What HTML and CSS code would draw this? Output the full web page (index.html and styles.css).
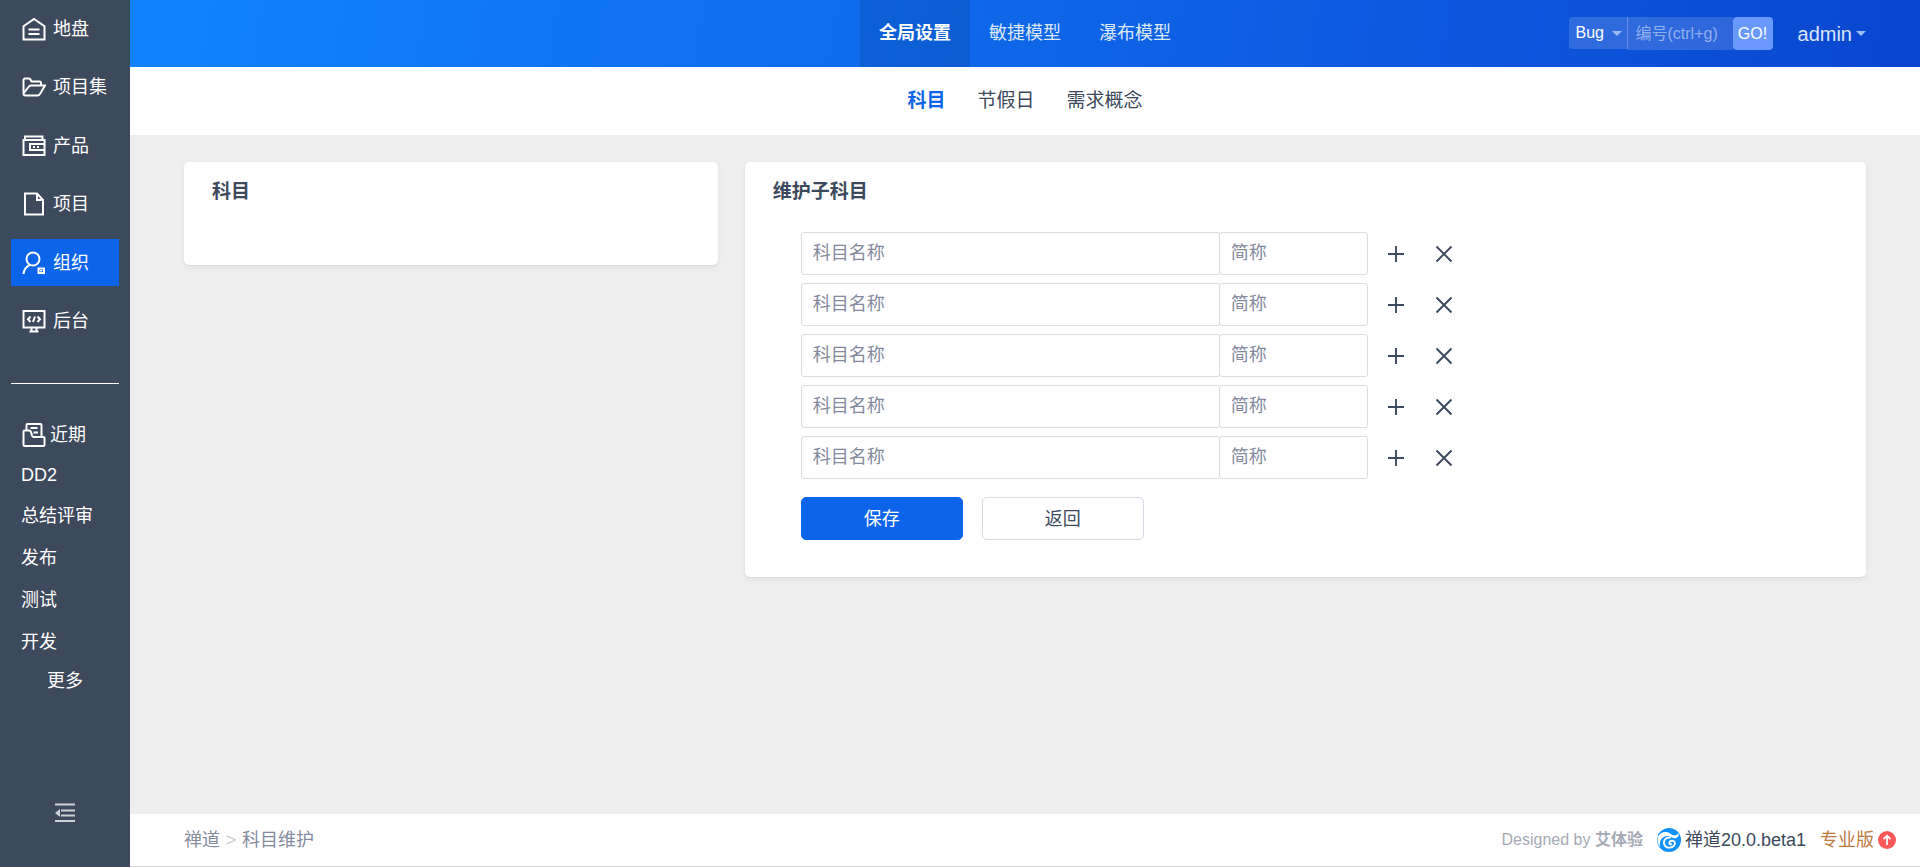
FILE: index.html
```html
<!DOCTYPE html>
<html lang="zh-CN">
<head>
<meta charset="utf-8">
<title>科目维护</title>
<link rel="stylesheet" href="styles.css">
</head>
<body>
<div class="app">
  <aside class="sidebar">
    <nav class="menu">
      <a class="menu-item" href="#"><svg class="icon" viewBox="0 0 24 24"><path d="M1.500 9.200 12 2l10.500 7.200V22.500h-21z"/><path d="M6.500 12.500h11M6.500 17h11"/></svg>地盘</a>
      <a class="menu-item" href="#"><svg class="icon" viewBox="0 0 24 24"><path d="M1.500 18.500V5q0-1.500 1.500-1.500h4q1 0 1.500 1l1 2h8q1.500 0 1.500 1.500v2.500M1.500 18.500l5-6.500q1-1.500 2.500-1.500h14l-5 8.500q-1 1.500-2.500 1.500h-12q-2 0-2-2z"/></svg>项目集</a>
      <a class="menu-item" href="#"><svg class="icon" viewBox="0 0 24 24"><path d="M3 6V2.500h17.500V6M1.500 6h21v15h-21zM22.500 10H8v6h14.500"/><path d="M11 13h2M15 13h2"/></svg>产品</a>
      <a class="menu-item" href="#"><svg class="icon" viewBox="0 0 24 24"><path d="M3 1.500h12l6 6.500v14.500H3zM15 1.500V8h6"/></svg>项目</a>
      <a class="menu-item is-active" href="#"><svg class="icon" viewBox="0 0 24 24"><circle cx="11" cy="8" r="6.500"/><path d="M1.500 23c.3-4 2.500-7 6-8.800"/><path d="M16.500 17.500h5.500v4.500h-5.500zM19.200 19v1.500"/></svg>组织</a>
      <a class="menu-item" href="#"><svg class="icon" viewBox="0 0 24 24"><path d="M1.500 2h21v16.500h-21zM9.500 18.500v3.500M14.500 18.500v3.500M7.500 22.500h9M8.500 7.500 6 10.200 8.500 13M15.500 7.500l2.500 2.700-2.500 2.800M13 7.500 11 13"/></svg>后台</a>
    </nav>
    <div class="recent">
      <h2 class="recent-title"><svg class="icon" viewBox="0 0 24 24"><path d="M4.500 7.500V2q0-1 1-1h13q1 0 1 1v12M1.500 21.500v-13q0-1 1-1H7q1.500 0 2 1.500l1 3.500q.5 1.500 2 1.500h9.500q1 0 1 1v6.500q0 1.500-1 1.500h-19q-1 0-1-1.500zM8.500 5h7M11.500 9.500H16"/></svg>近期</h2>
      <a class="recent-item" href="#">DD2</a>
      <a class="recent-item" href="#">总结评审</a>
      <a class="recent-item" href="#">发布</a>
      <a class="recent-item" href="#">测试</a>
      <a class="recent-item" href="#">开发</a>
      <a class="recent-more" href="#">更多</a>
    </div>
    <button class="collapse" type="button" aria-label="收起菜单"><svg viewBox="0 0 20 20"><path d="M0 1.500h20M6 7.500h14M6 12.500h14M0 18h20"/><path class="solid" d="M0 10l5-4v8z"/></svg></button>
  </aside>

  <div class="main">
    <header class="topbar">
      <nav class="tabs">
        <a class="tab is-active" href="#">全局设置</a>
        <a class="tab" href="#">敏捷模型</a>
        <a class="tab" href="#">瀑布模型</a>
      </nav>
      <div class="tools">
        <form class="search">
          <div class="search-type">
            <select aria-label="搜索类型"><option>Bug</option></select>
            <svg class="caret" viewBox="0 0 10 5"><path d="M0 0h10L5 5z"/></svg>
          </div>
          <input class="search-input" type="text" placeholder="编号(ctrl+g)" aria-label="编号">
          <button class="search-go" type="button">GO!</button>
        </form>
        <button class="user" type="button">admin<svg class="caret" viewBox="0 0 10 5"><path d="M0 0h10L5 5z"/></svg></button>
      </div>
    </header>

    <nav class="subnav">
      <a class="subnav-item is-active" href="#">科目</a>
      <a class="subnav-item" href="#">节假日</a>
      <a class="subnav-item" href="#">需求概念</a>
    </nav>

    <main class="content">
      <section class="panel panel-tree">
        <h1 class="panel-title">科目</h1>
      </section>
      <section class="panel">
        <h1 class="panel-title">维护子科目</h1>
        <form class="subjects">
          <div class="row">
            <div class="fields"><input class="field" type="text" placeholder="科目名称" aria-label="科目名称"><input class="field field-short" type="text" placeholder="简称" aria-label="简称"></div>
            <button class="row-btn" type="button" aria-label="添加"><svg viewBox="0 0 18 18"><path d="M9 1v16M1 9h16"/></svg></button>
            <button class="row-btn" type="button" aria-label="删除"><svg viewBox="0 0 18 18"><path d="M1.500 1.500l15 15M16.500 1.500l-15 15"/></svg></button>
          </div>
          <div class="row">
            <div class="fields"><input class="field" type="text" placeholder="科目名称" aria-label="科目名称"><input class="field field-short" type="text" placeholder="简称" aria-label="简称"></div>
            <button class="row-btn" type="button" aria-label="添加"><svg viewBox="0 0 18 18"><path d="M9 1v16M1 9h16"/></svg></button>
            <button class="row-btn" type="button" aria-label="删除"><svg viewBox="0 0 18 18"><path d="M1.500 1.500l15 15M16.500 1.500l-15 15"/></svg></button>
          </div>
          <div class="row">
            <div class="fields"><input class="field" type="text" placeholder="科目名称" aria-label="科目名称"><input class="field field-short" type="text" placeholder="简称" aria-label="简称"></div>
            <button class="row-btn" type="button" aria-label="添加"><svg viewBox="0 0 18 18"><path d="M9 1v16M1 9h16"/></svg></button>
            <button class="row-btn" type="button" aria-label="删除"><svg viewBox="0 0 18 18"><path d="M1.500 1.500l15 15M16.500 1.500l-15 15"/></svg></button>
          </div>
          <div class="row">
            <div class="fields"><input class="field" type="text" placeholder="科目名称" aria-label="科目名称"><input class="field field-short" type="text" placeholder="简称" aria-label="简称"></div>
            <button class="row-btn" type="button" aria-label="添加"><svg viewBox="0 0 18 18"><path d="M9 1v16M1 9h16"/></svg></button>
            <button class="row-btn" type="button" aria-label="删除"><svg viewBox="0 0 18 18"><path d="M1.500 1.500l15 15M16.500 1.500l-15 15"/></svg></button>
          </div>
          <div class="row">
            <div class="fields"><input class="field" type="text" placeholder="科目名称" aria-label="科目名称"><input class="field field-short" type="text" placeholder="简称" aria-label="简称"></div>
            <button class="row-btn" type="button" aria-label="添加"><svg viewBox="0 0 18 18"><path d="M9 1v16M1 9h16"/></svg></button>
            <button class="row-btn" type="button" aria-label="删除"><svg viewBox="0 0 18 18"><path d="M1.500 1.500l15 15M16.500 1.500l-15 15"/></svg></button>
          </div>
          <div class="actions">
            <button class="btn btn-primary" type="button">保存</button>
            <button class="btn" type="button">返回</button>
          </div>
        </form>
      </section>
    </main>

    <footer class="footer">
      <nav class="crumbs"><a href="#">禅道</a><span class="crumb-sep">&gt;</span><a href="#">科目维护</a></nav>
      <div class="credits">
        <span class="designed">Designed by <a href="#">艾体验</a></span>
        <a class="version" href="#"><svg class="logo" viewBox="0 0 24 24"><circle cx="12" cy="12" r="12"/><path class="wave" d="M.5 9C2.500 5.500 6 3.500 9.500 4c3.500.6 5 3.500 8 3.500 2 0 3.200-1 4-2.500.8 2-.3 4.500-2.500 5.200-3 .9-4.500-2-7.500-2.200C7 7.800 4 10 3 14.500c-.4 2-.2 3 .2 4.500C1 16.500 0 12.500.500 9z"/><path d="M13 9.500c-4-.2-6.500 2.500-6 6 .5 3 3.500 4.500 6.500 4s5-2.800 4.300-5c-.7-2-3.800-2.300-5-.8-1 1.300-.2 2.800 1.200 2.600"/></svg>禅道20.0.beta1</a>
        <a class="upgrade" href="#">专业版<svg class="up" viewBox="0 0 18 18"><circle cx="9" cy="9" r="9"/><path d="M9 14V5M5.500 8.200 9 4.700l3.500 3.500"/></svg></a>
      </div>
    </footer>
  </div>
</div>
</body>
</html>
```
FILE: styles.css
```css
* { box-sizing: border-box; }

body {
  margin: 0;
  font-family: "Liberation Sans", "Noto Sans CJK SC", sans-serif;
  font-size: 18px;
  line-height: 24px;
  color: #3c495c;
  background: #eee;
}

a { color: inherit; text-decoration: none; }
h1, h2 { margin: 0; }
button, input, select { margin: 0; padding: 0; border: 0; font: inherit; color: inherit; background: none; }
svg { flex: none; fill: none; stroke: currentColor; stroke-width: 2; }

.app { display: flex; min-height: 100vh; }

/* Sidebar */
.sidebar {
  flex: none;
  display: flex;
  flex-direction: column;
  width: 130px;
  padding: 5px 11px 44px;
  color: #fff;
  background: #3d495c;
}
.menu { display: flex; flex-direction: column; justify-content: space-between; height: 340px; }
.menu-item { display: flex; align-items: center; gap: 7px; height: 47px; padding-left: 11px; white-space: nowrap; }
.menu-item.is-active { background: #0c64eb; }
.icon { width: 24px; height: 24px; stroke-width: 2; }

.recent {
  display: flex;
  flex-direction: column;
  margin-top: 38px;
  padding-top: 31px;
  border-top: 1px solid #fff;
}
.recent-title { display: flex; align-items: center; gap: 4px; height: 40px; padding-left: 11px; font-size: 18px; font-weight: 400; }
.recent-item { padding-left: 10px; line-height: 42px; }
.recent-item:nth-of-type(1) { line-height: 40px; }
.recent-more { text-align: center; line-height: 36px; }

.collapse { align-self: center; width: 20px; height: 20px; margin-top: auto; color: #ced1d9; }
.collapse svg { display: block; width: 20px; height: 20px; }
.collapse .solid { fill: currentColor; stroke: none; }

/* Header */
.main { flex: 1; display: flex; flex-direction: column; min-width: 0; }
.topbar {
  display: grid;
  grid-template-columns: 1fr auto 1fr;
  height: 67px;
  color: #fff;
  background: linear-gradient(100deg, #1183fe 0%, #0e66e8 50%, #0a46d0 100%);
}
.tabs { grid-column: 2; display: flex; }
.tab { width: 110px; line-height: 66px; text-align: center; color: #dbe8fc; }
.tab.is-active { font-weight: 700; color: #fff; background: rgba(8, 70, 160, .3); }
.tools { display: flex; justify-content: flex-end; align-items: center; gap: 25px; padding-right: 54px; }
.search { display: flex; height: 33px; font-size: 16px; }
.search-type { position: relative; width: 59px; height: 32px; border-right: 1px solid rgba(255, 255, 255, .25); border-radius: 4px 0 0 4px; background: rgba(255, 255, 255, .15); }
.search-type select { width: 100%; height: 100%; padding-left: 7px; appearance: none; }
.caret { width: 10px; height: 5px; fill: #9fbdf1; stroke: none; }
.search-type .caret { position: absolute; top: 14px; right: 5px; pointer-events: none; }
.search-input { width: 105px; padding-left: 8px; background: rgba(255, 255, 255, .15); }
.search-input::placeholder { color: #8fb0ef; opacity: 1; }
.search-go { width: 40px; border-radius: 4px; background: #6998ff; }
.user { display: flex; align-items: center; gap: 4px; font-size: 20px; color: #dbe5fa; }

.subnav {
  display: flex;
  justify-content: center;
  gap: 32px;
  height: 68px;
  font-size: 19px;
  line-height: 68px;
  background: #fff;
}
.subnav-item.is-active { font-weight: 700; color: #0c64eb; }

/* Content */
.content {
  flex: 1;
  display: grid;
  grid-template-columns: 10fr 21fr;
  gap: 27px;
  align-items: start;
  padding: 27px 54px;
}
.panel { padding: 18px 28px 37px; border-radius: 5px; background: #fff; box-shadow: 0 1px 1px rgba(0, 0, 0, .05), 0 2px 6px rgba(0, 0, 0, .05); }
.panel-tree { min-height: 103px; }
.panel-title { font-size: 19px; line-height: 24px; }
.subjects { display: flex; flex-direction: column; gap: 8px; margin-top: 28px; padding-left: 28px; }
.row { display: flex; align-items: center; }
.fields { flex: 0 1 567px; display: flex; min-width: 0; margin-right: 9px; }
.field { flex: 1; min-width: 0; height: 43px; padding: 0 11px; border: 1px solid #dcdcdc; border-radius: 3px; background: #fff; }
.field-short { flex: 0 1 149px; margin-left: -1px; }
.field::placeholder { color: #838a9d; opacity: 1; }
.row-btn { display: flex; justify-content: center; width: 39px; margin-right: 9px; }
.row-btn svg { width: 18px; height: 18px; stroke-width: 1.900; }
.actions { display: flex; gap: 19px; margin-top: 10px; }
.btn { width: 162px; height: 43px; border: 1px solid #d8dbe6; border-radius: 5px; }
.btn-primary { color: #fff; border-color: #0c64eb; background: #0c64eb; }

/* Footer */
.footer {
  display: flex;
  justify-content: space-between;
  align-items: center;
  height: 53px;
  padding: 0 24px 0 54px;
  border-bottom: 1px solid #d5d5dc;
  background: #fff;
}
.crumbs { display: flex; color: #838a9d; }
.crumb-sep { width: 22px; text-align: center; color: #cbcbcb; }
.credits { display: flex; align-items: center; gap: 14px; }
.designed { font-size: 16px; color: #a6aab5; }
.designed a { font-weight: 700; }
.version, .upgrade { display: flex; align-items: center; gap: 4px; }
.upgrade { color: #bd7b46; }
.logo { width: 24px; height: 24px; stroke: #fff; stroke-width: 1.900; stroke-linecap: round; }
.logo circle { fill: #1191fb; stroke: none; }
.logo .wave { fill: #fff; stroke: none; }
.up { width: 18px; height: 18px; stroke: #fff; stroke-width: 1.800; }
.up circle { fill: #ff5858; stroke: none; }
```
